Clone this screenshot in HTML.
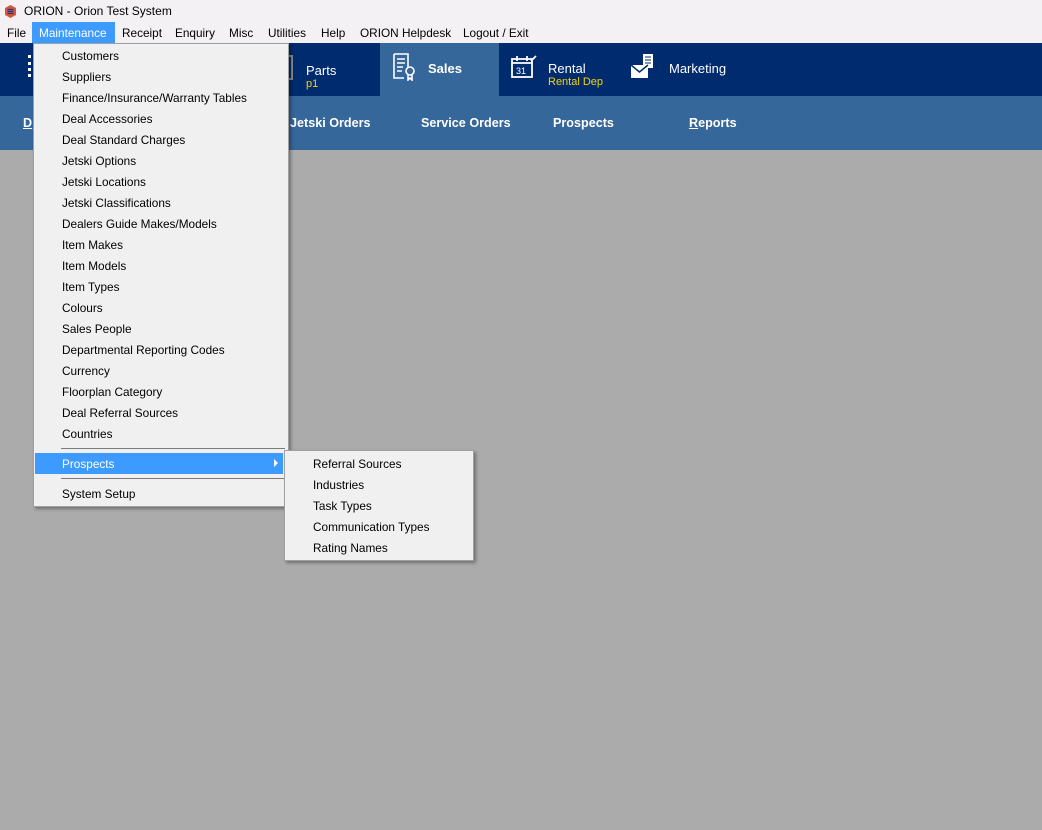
<!DOCTYPE html>
<html><head><meta charset="utf-8"><style>
*{margin:0;padding:0;box-sizing:border-box}
body{width:1042px;height:830px;overflow:hidden;background:#ababab;font-family:"Liberation Sans",sans-serif;position:relative;font-size:12px;color:#000}
.abs{position:absolute}
#title{left:0;top:0;width:1042px;height:22px;background:#f3f1f4;}
#title span{position:absolute;left:24px;top:4px;font-size:12px}
#menubar{left:0;top:22px;width:1042px;height:21px;background:#f3f1f4}
#menubar span{position:absolute;top:4px;font-size:11.8px}
#dark{left:0;top:43px;width:1042px;height:53px;background:#002b6e}
#light{left:0;top:96px;width:1042px;height:54px;background:#35679a}
.nav{color:#fff;font-weight:bold;font-size:12.6px;position:absolute;top:116px}
.tabt{color:#fff;font-size:13px;position:absolute}
.sub{color:#f5d400;font-size:11px;position:absolute}
.menu{background:#f0f0f0;border:1px solid #a0a0a0;box-shadow:2px 2px 3px rgba(0,0,0,.35)}
.mi{position:absolute;font-size:11.8px;white-space:nowrap}
.sep{position:absolute;height:1px;background:#7a7a7a}
</style></head><body>
<div id="title" class="abs">
<svg class="abs" style="left:5px;top:5px" width="11" height="13" viewBox="0 0 11 13"><path d="M5.5 0L11 3v7L5.5 13 0 10V3z" fill="#d9543a"/><path d="M2.5 4.5h6M2.5 6.5h6M2.5 8.5h6" stroke="#1d3d80" stroke-width="1.3"/></svg>
<span>ORION - Orion Test System</span></div>
<div id="menubar" class="abs">
<span style="left:7px">File</span>
<div class="abs" style="left:32px;top:0;width:83px;height:21px;background:#3d9bff"></div>
<span style="left:39px;color:#fff">Maintenance</span>
<span style="left:122px">Receipt</span>
<span style="left:175px">Enquiry</span>
<span style="left:229px">Misc</span>
<span style="left:268px">Utilities</span>
<span style="left:321px">Help</span>
<span style="left:360px">ORION Helpdesk</span>
<span style="left:463px">Logout / Exit</span>
</div>
<div id="dark" class="abs"></div>
<div class="abs" style="left:380px;top:43px;width:119px;height:53px;background:#35679a"></div>
<div id="light" class="abs"></div>
<div class="abs" style="left:28px;top:55px;width:5px;height:22px;border-left:3px dotted #fff"></div>
<div class="abs" style="left:289px;top:55px;width:4px;height:25px;border:2px solid #888;border-left:none"></div>
<div class="tabt" style="left:306px;top:63px">Parts</div><div class="sub" style="left:306px;top:78px">p1</div>
<svg class="abs" style="left:392px;top:53px" width="24" height="28" viewBox="0 0 24 28" fill="none" stroke="#fff" stroke-width="1.6"><path d="M2 1h14v14M2 1v24h10"/><path d="M5 6h8M5 10h8M5 14h6M5 18h5"/><circle cx="18" cy="18" r="4"/><path d="M16 22v5l2-2 2 2v-5"/></svg>
<div class="tabt" style="left:428px;top:61px;font-weight:bold">Sales</div>
<svg class="abs" style="left:511px;top:55px" width="26" height="24" viewBox="0 0 26 24" fill="none" stroke="#fff" stroke-width="1.8"><rect x="1" y="4" width="20" height="18"/><path d="M1 8h20M6 1v5M16 1v5M20 6l5-5"/><text x="5" y="19" fill="#fff" stroke="none" font-size="9" font-family="Liberation Sans">31</text></svg>
<div class="tabt" style="left:548px;top:61px">Rental</div><div class="sub" style="left:548px;top:76px">Rental Dep</div>
<svg class="abs" style="left:630px;top:54px" width="28" height="26" viewBox="0 0 28 26"><rect x="13" y="0" width="10" height="14" fill="#fff"/><rect x="1" y="11" width="17" height="13" fill="#fff"/><path d="M1 11l8.5 7 8.5-7" fill="none" stroke="#002b6e" stroke-width="1.5"/><path d="M15 3h6M15 6h6M15 9h6" stroke="#002b6e"/></svg>
<div class="tabt" style="left:669px;top:61px">Marketing</div>
<div class="nav" style="left:23px;text-decoration:underline">D</div>
<div class="nav" style="left:290px">Jetski Orders</div>
<div class="nav" style="left:421px">Service Orders</div>
<div class="nav" style="left:553px">Prospects</div>
<div class="nav" style="left:689px"><u>R</u>eports</div>

<div class="menu abs" style="left:33px;top:43px;width:256px;height:464px"></div>
<div class="abs" style="left:35px;top:453px;width:248px;height:21px;background:#3d9bff"></div>
<div class="sep" style="left:61px;top:448px;width:224px"></div>
<div class="sep" style="left:61px;top:478px;width:224px"></div>
<div class="abs" style="left:274px;top:459px;width:0;height:0;border-left:4px solid #fff;border-top:4px solid transparent;border-bottom:4px solid transparent"></div>
<div class="mi" style="left:62px;top:49px">Customers</div>
<div class="mi" style="left:62px;top:70px">Suppliers</div>
<div class="mi" style="left:62px;top:91px">Finance/Insurance/Warranty Tables</div>
<div class="mi" style="left:62px;top:112px">Deal Accessories</div>
<div class="mi" style="left:62px;top:133px">Deal Standard Charges</div>
<div class="mi" style="left:62px;top:154px">Jetski Options</div>
<div class="mi" style="left:62px;top:175px">Jetski Locations</div>
<div class="mi" style="left:62px;top:196px">Jetski Classifications</div>
<div class="mi" style="left:62px;top:217px">Dealers Guide Makes/Models</div>
<div class="mi" style="left:62px;top:238px">Item Makes</div>
<div class="mi" style="left:62px;top:259px">Item Models</div>
<div class="mi" style="left:62px;top:280px">Item Types</div>
<div class="mi" style="left:62px;top:301px">Colours</div>
<div class="mi" style="left:62px;top:322px">Sales People</div>
<div class="mi" style="left:62px;top:343px">Departmental Reporting Codes</div>
<div class="mi" style="left:62px;top:364px">Currency</div>
<div class="mi" style="left:62px;top:385px">Floorplan Category</div>
<div class="mi" style="left:62px;top:406px">Deal Referral Sources</div>
<div class="mi" style="left:62px;top:427px">Countries</div>
<div class="mi" style="left:62px;top:457px;color:#fff">Prospects</div>
<div class="mi" style="left:62px;top:487px">System Setup</div>

<div class="menu abs" style="left:284px;top:450px;width:190px;height:111px"></div>
<div class="mi" style="left:313px;top:457px">Referral Sources</div>
<div class="mi" style="left:313px;top:478px">Industries</div>
<div class="mi" style="left:313px;top:499px">Task Types</div>
<div class="mi" style="left:313px;top:520px">Communication Types</div>
<div class="mi" style="left:313px;top:541px">Rating Names</div>
</body></html>
